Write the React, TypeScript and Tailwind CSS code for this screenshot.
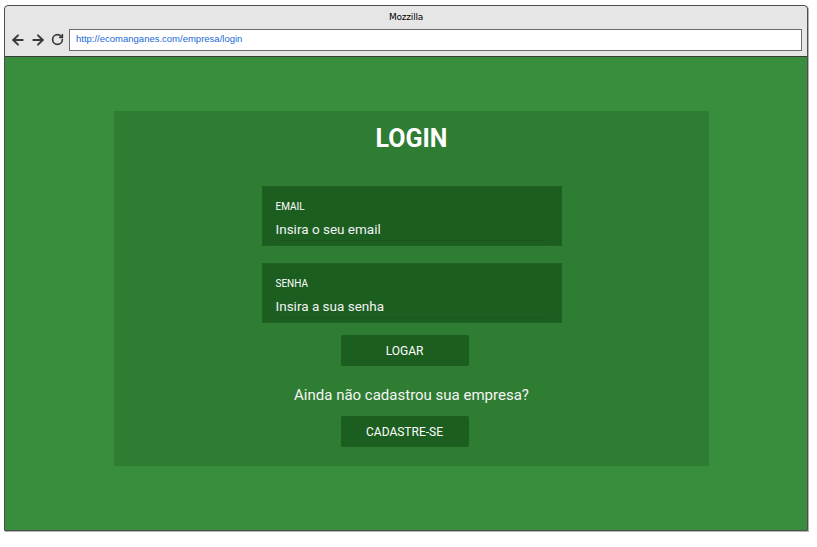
import { ArrowLeft, ArrowRight, RotateCw } from "lucide-react";

function Field({ label, placeholder }: { label: string; placeholder: string }) {
  return (
    <div className="w-[300px] h-[60px] bg-[#1b5e20] border border-[#1e6323] px-[13px] pt-[14px]">
      <p className="text-[10px] leading-[12px] text-white">{label}</p>
      <div className="mt-[7px] border-b border-[#1a561e] pb-[2px] text-[13.5px] leading-[18px] text-[#f2f2f2]">
        {placeholder}
      </div>
    </div>
  );
}

export default function App() {
  return (
    <div className="w-[817px] h-[547px] bg-white pl-[4px] pt-[5px] font-['Roboto',sans-serif]">
      <div className="w-[804px] h-[526px] flex flex-col rounded-t-[4px] border border-[#4d4d4d] bg-[#e6e6e6] shadow-[1px_1px_0_#b3b3b3]">
        <div className="h-[22px] flex items-center justify-center pt-[1px] font-['DejaVu_Sans',sans-serif] text-[9px] tracking-[-0.2px] text-black">
          Mozzilla
        </div>
        <div className="h-[28px] flex items-center gap-[2px] pl-[5px] pr-[5px] pb-[5px]">
          <div className="flex items-center gap-[4px] text-[#3a3a3a]">
            <ArrowLeft size={16} strokeWidth={3} />
            <ArrowRight size={16} strokeWidth={3} />
            <RotateCw size={13} strokeWidth={3} className="ml-[1px]" />
          </div>
          <div className="ml-[3px] flex-1 h-[22px] flex items-center border border-[#6b6b6b] bg-white px-[6px] font-['Liberation_Sans',sans-serif] text-[9.5px] text-[#1a6ad6]">
            http://ecomanganes.com/empresa/login
          </div>
        </div>
        <div className="flex-1 border-t border-[#3a3a3a] bg-[#388e3c] pt-[54px] pl-[109px]">
          <div className="w-[595px] h-[355px] bg-[#2e7d32] flex flex-col items-center pt-[13px]">
            <h1 className="text-[25px] leading-[30px] font-bold text-white">LOGIN</h1>
            <div className="mt-[32px] flex flex-col gap-[17px]">
              <Field label="EMAIL" placeholder="Insira o seu email" />
              <Field label="SENHA" placeholder="Insira a sua senha" />
            </div>
            <button className="mt-[12px] mr-[14px] w-[128px] h-[31px] rounded-[2px] bg-[#1b5e20] text-[12px] text-white">
              LOGAR
            </button>
            <p className="mt-[19px] text-[15px] leading-[20px] text-[#f5f5f5]">
              Ainda não cadastrou sua empresa?
            </p>
            <button className="mt-[11px] mr-[14px] w-[128px] h-[31px] rounded-[2px] bg-[#1b5e20] text-[12px] text-white">
              CADASTRE-SE
            </button>
          </div>
        </div>
      </div>
    </div>
  );
}
